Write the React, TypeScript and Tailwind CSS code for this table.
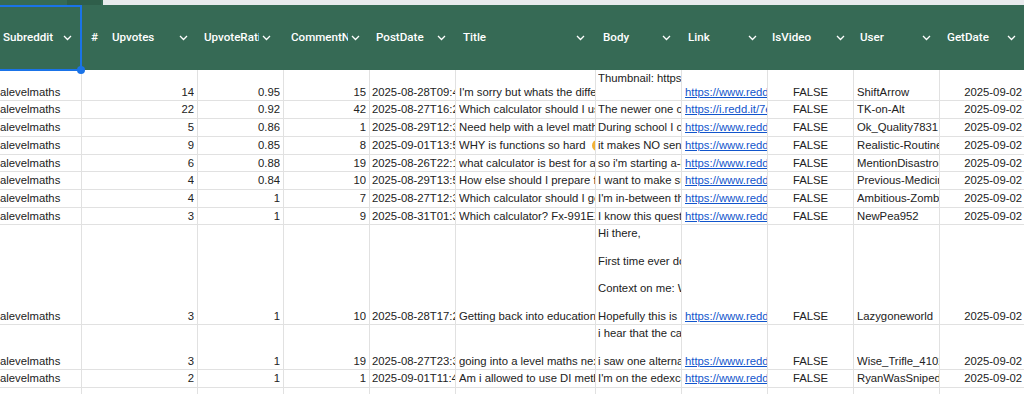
import React from "react";

type Row = {
  up: string;
  ratio: string;
  comments: string;
  date: string;
  title: React.ReactNode;
  body: string;
  link: string;
  user: string;
};

const rows: Row[] = [
  { up: "14", ratio: "0.95", comments: "15", date: "2025-08-28T09:41:22", title: "I'm sorry but whats the difference", body: "Thumbnail: https://preview.redd.it/x\n\u00a0", link: "https://www.reddit.com/r/alevelmaths", user: "ShiftArrow" },
  { up: "22", ratio: "0.92", comments: "42", date: "2025-08-27T16:22:10", title: "Which calculator should I use", body: "The newer one can do more", link: "https://i.redd.it/7ex9q", user: "TK-on-Alt" },
  { up: "5", ratio: "0.86", comments: "1", date: "2025-08-29T12:31:05", title: "Need help with a level maths", body: "During school I can", link: "https://www.reddit.com/r/alevelmaths", user: "Ok_Quality7831" },
  {
    up: "9",
    ratio: "0.85",
    comments: "8",
    date: "2025-09-01T13:52:44",
    title: (
      <>
        WHY is functions so hard{" "}
        <span className="ml-[3px] inline-block h-[11px] w-[11px] rounded-full bg-[#f2b134] align-[-2px]" />
      </>
    ),
    body: "it makes NO sense",
    link: "https://www.reddit.com/r/alevelmaths",
    user: "Realistic-Routine4821",
  },
  { up: "6", ratio: "0.88", comments: "19", date: "2025-08-26T22:17:39", title: "what calculator is best for a level", body: "so i'm starting a-level", link: "https://www.reddit.com/r/alevelmaths", user: "MentionDisastrous3190" },
  { up: "4", ratio: "0.84", comments: "10", date: "2025-08-29T13:58:02", title: "How else should I prepare for", body: "I want to make sure", link: "https://www.reddit.com/r/alevelmaths", user: "Previous-Medicine-22" },
  { up: "4", ratio: "1", comments: "7", date: "2025-08-27T12:36:51", title: "Which calculator should I get", body: "I'm in-between the two", link: "https://www.reddit.com/r/alevelmaths", user: "Ambitious-Zombie-77" },
  { up: "3", ratio: "1", comments: "9", date: "2025-08-31T01:34:18", title: "Which calculator? Fx-991EX or", body: "I know this question", link: "https://www.reddit.com/r/alevelmaths", user: "NewPea952" },
  { up: "3", ratio: "1", comments: "10", date: "2025-08-28T17:25:47", title: "Getting back into education", body: "Hi there,\n\nFirst time ever doing\n\nContext on me: Well\n\nHopefully this is  okay", link: "https://www.reddit.com/r/alevelmaths", user: "Lazygoneworld" },
  { up: "3", ratio: "1", comments: "19", date: "2025-08-27T23:38:09", title: "going into a level maths next", body: "i hear that the calc\n\ni saw one alternative", link: "https://www.reddit.com/r/alevelmaths", user: "Wise_Trifle_4102" },
  { up: "2", ratio: "1", comments: "1", date: "2025-09-01T11:46:30", title: "Am i allowed to use DI method", body: "I'm on the edexcel", link: "https://www.reddit.com/r/alevelmaths", user: "RyanWasSniped" },
];

const grid =
  "grid grid-cols-[82px_116px_86px_86px_86px_140px_86px_86px_86px_86px_86px]";

function Chevron() {
  return (
    <svg width="9" height="6" viewBox="0 0 9 6" className="shrink-0">
      <path d="M1 1l3.5 3.5L8 1" fill="none" stroke="#ffffff" strokeWidth="1.3" />
    </svg>
  );
}

function HeaderCell({
  label,
  pad,
  clip,
  hash,
}: {
  label: string;
  pad: string;
  clip?: string;
  hash?: boolean;
}) {
  if (clip) {
    return (
      <div className={`flex items-center pt-[1px] ${pad}`}>
        <span className={`${clip} overflow-hidden whitespace-nowrap`}>{label}</span>
        <span className="ml-[3px]">
          <Chevron />
        </span>
      </div>
    );
  }
  return (
    <div className={`flex items-center justify-between pt-[1px] ${pad}`}>
      <span className="flex items-center whitespace-nowrap">
        {hash && <span className="mr-[14px]">#</span>}
        {label}
      </span>
      <Chevron />
    </div>
  );
}

function Cell({
  children,
  align = "text-left",
  pad = "px-[3px]",
}: {
  children?: React.ReactNode;
  align?: string;
  pad?: string;
}) {
  return (
    <div
      className={`flex items-end overflow-hidden border-r border-b border-[#e1e1e1] pt-[2px] pb-[1px] ${pad}`}
    >
      <div className={`w-full overflow-hidden whitespace-pre ${align}`}>{children}</div>
    </div>
  );
}

export default function App() {
  return (
    <div className="relative h-[394px] w-[1024px] overflow-hidden bg-white">
      <div className="flex h-[5px]">
        <div className="w-[67px] bg-[#366a55]" />
        <div className="w-[34px] bg-[#2f5e4a]" />
        <div className="w-[2px] bg-[#366a55]" />
        <div className="flex-1 bg-[#e8eaed]" />
      </div>

      <div
        className={`${grid} h-[65px] bg-[#366a55] text-[11.6px] font-medium text-white`}
        style={{ fontFamily: "Roboto, 'Liberation Sans', sans-serif" }}
      >
        <HeaderCell label="Subreddit" pad="pl-[3px] pr-[10px]" />
        <HeaderCell label="Upvotes" hash pad="pl-[9px] pr-[10px]" />
        <HeaderCell label="UpvoteRatio" clip="w-[55px]" pad="pl-[6px]" />
        <HeaderCell label="CommentNum" clip="w-[57px]" pad="pl-[7px]" />
        <HeaderCell label="PostDate" pad="pl-[6px] pr-[10px]" />
        <HeaderCell label="Title" pad="pl-[7px] pr-[11px]" />
        <HeaderCell label="Body" pad="pl-[7px] pr-[11px]" />
        <HeaderCell label="Link" pad="pl-[6px] pr-[11px]" />
        <HeaderCell label="IsVideo" pad="pl-[4px] pr-[9px]" />
        <HeaderCell label="User" pad="pl-[6px] pr-[9px]" />
        <HeaderCell label="GetDate" pad="pl-[7px] pr-[10px]" />
      </div>

      <div
        className="text-[11.3px] leading-[13.7px] text-[#222222]"
        style={{ fontFamily: "'Liberation Sans', Arial, sans-serif" }}
      >
        {rows.map((r, i) => (
          <div key={i} className={grid}>
            <Cell pad="pl-0 pr-[3px]">alevelmaths</Cell>
            <Cell align="text-right">{r.up}</Cell>
            <Cell align="text-right">{r.ratio}</Cell>
            <Cell align="text-right">{r.comments}</Cell>
            <Cell pad="pl-[2px] pr-0">{r.date}</Cell>
            <Cell pad="pl-[3px] pr-0">{r.title}</Cell>
            <Cell pad="pl-[2px] pr-0">{r.body}</Cell>
            <Cell pad="pl-[3px] pr-0">
              <span className="text-[#1155cc] underline">{r.link}</span>
            </Cell>
            <Cell align="text-center">FALSE</Cell>
            <Cell pad="pl-[3px] pr-0">{r.user}</Cell>
            <Cell align="text-right">2025-09-02</Cell>
          </div>
        ))}
        <div className={`${grid} h-[40px]`}>
          {Array.from({ length: 11 }).map((_, i) => (
            <div key={i} className="border-r border-[#e1e1e1]" />
          ))}
        </div>
      </div>

      <div className="absolute left-[-4px] top-[5px] h-[66px] w-[86px] border-2 border-[#1a73e8]" />
      <div className="absolute left-[77px] top-[66px] h-[8px] w-[8px] rounded-full bg-[#1a73e8]" />
    </div>
  );
}
